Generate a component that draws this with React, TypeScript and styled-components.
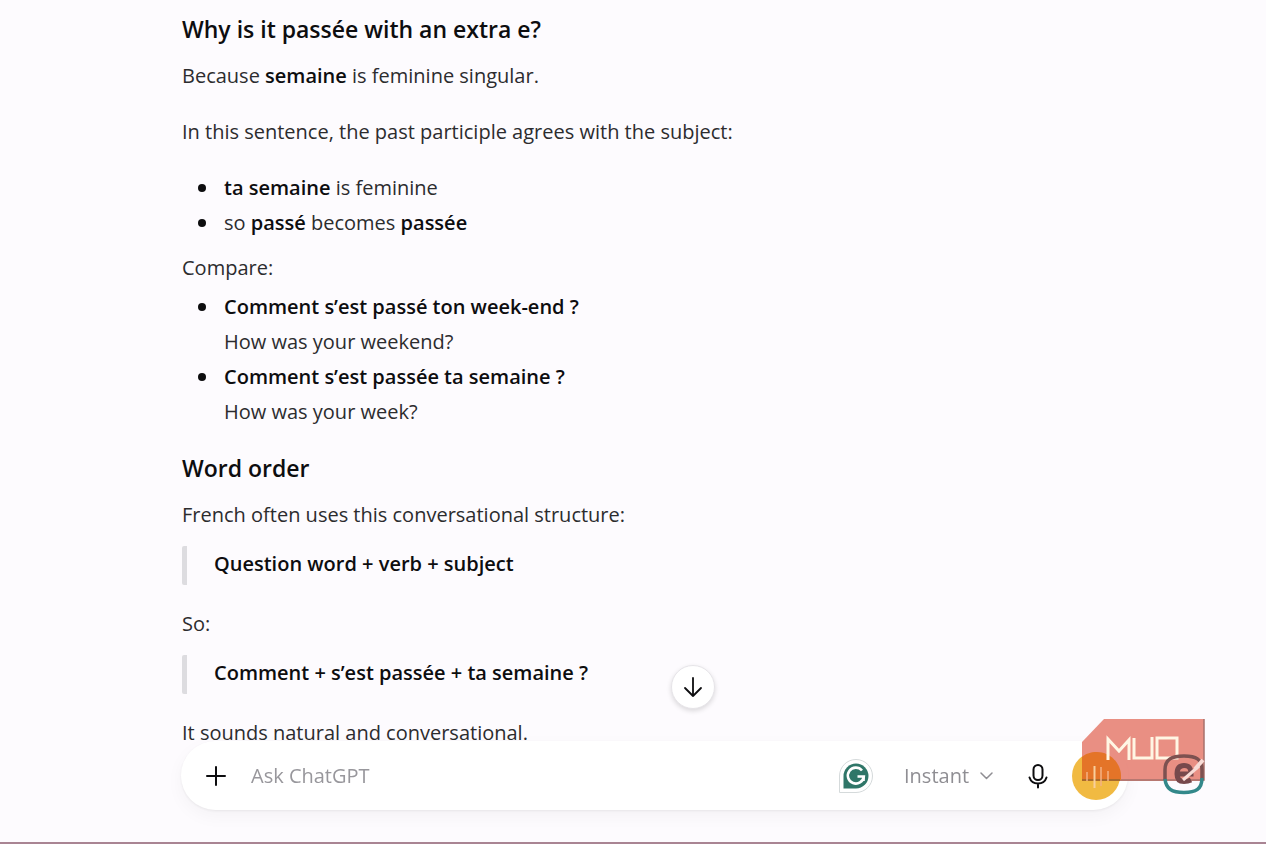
import React from "react";
import styled, { createGlobalStyle } from "styled-components";

const GlobalStyle = createGlobalStyle`
  *, *::before, *::after { box-sizing: border-box; }
  body {
    margin: 0;
    background: #fdfbfe;
    color: #2c2c2e;
    font-family: "Open Sans", "Noto Sans", sans-serif;
  }
  button, input, select { font: inherit; color: inherit; }
`;

const Page = styled.div`
  min-height: 100vh;
  border-bottom: 2px solid #a98493;
`;

const Article = styled.main`
  padding: 12px 140px 80px 182px;
  font-size: 20px;
  line-height: 35px;
`;

const Heading = styled.h2`
  margin: 0 0 11px;
  color: #0d0d0f;
  font-size: 23px;
  font-weight: 550;
`;

const Paragraph = styled.p<{ $gap?: number }>`
  margin: 0 0 ${({ $gap = 21 }) => $gap}px;
`;

const Strong = styled.strong`
  color: #0d0d0f;
  font-weight: 600;
`;

const List = styled.ul<{ $gap: number }>`
  margin: 0 0 ${({ $gap }) => $gap}px;
  padding: 0;
  list-style: none;
`;

const Item = styled.li`
  display: grid;
  grid-template-columns: 24px 1fr;
  padding-left: 18px;

  &::before {
    content: "";
    width: 8px;
    height: 8px;
    margin: 14px 0 0 -2px;
    border-radius: 50%;
    background: #0d0d0f;
  }
`;

const Quote = styled.blockquote`
  margin: 0 0 21px;
  padding: 0 0 4px 27px;
  border-left: 5px solid #dddce0;
  border-radius: 2px;
`;

const ScrollButton = styled.button`
  position: fixed;
  bottom: 135px;
  left: calc(50% + 38px);
  display: grid;
  place-items: center;
  width: 44px;
  height: 44px;
  padding: 0;
  border: 1px solid #e6e4e8;
  border-radius: 50%;
  background: #fff;
  color: #0d0d0f;
  box-shadow: 0 2px 5px rgba(0, 0, 0, 0.14);
`;

const Composer = styled.form`
  position: fixed;
  right: 138px;
  bottom: 34px;
  left: 181px;
  display: flex;
  align-items: center;
  height: 69px;
  padding: 0 8px 0 19px;
  border-radius: 35px;
  background: #fff;
  color: #8f8e93;
  font-size: 20px;
  box-shadow: 0 1px 3px rgba(0, 0, 0, 0.07), 0 6px 18px rgba(0, 0, 0, 0.04);
`;

const IconButton = styled.button`
  display: grid;
  place-items: center;
  flex: none;
  width: 32px;
  height: 36px;
  padding: 0;
  border: 0;
  background: none;
  color: #0d0d0f;
`;

const Prompt = styled.input`
  flex: 1;
  min-width: 0;
  margin: 0 16px 0 19px;
  padding: 0;
  border: 0;
  outline: 0;
  background: none;

  &::placeholder { color: #98979c; opacity: 1; }
`;

const ModelPicker = styled.label`
  display: flex;
  align-items: center;
  gap: 10px;
  margin: 0 29px 0 34px;
`;

const ModelSelect = styled.select`
  padding: 0;
  border: 0;
  outline: 0;
  appearance: none;
  background: none;
`;

const VoiceButton = styled(IconButton)`
  width: 48px;
  height: 48px;
  margin-left: 18px;
  border-radius: 50%;
  background: #f1ba42;
`;

const Watermark = styled.svg`
  position: fixed;
  right: 60px;
  bottom: 46px;
  pointer-events: none;
`;

export default function App() {
  return (
    <Page>
      <GlobalStyle />
      <Article>
        <Heading>Why is it passée with an extra e?</Heading>
        <Paragraph>
          Because <Strong>semaine</Strong> is feminine singular.
        </Paragraph>
        <Paragraph>In this sentence, the past participle agrees with the subject:</Paragraph>
        <List $gap={10}>
          <Item>
            <span><Strong>ta semaine</Strong> is feminine</span>
          </Item>
          <Item>
            <span>so <Strong>passé</Strong> becomes <Strong>passée</Strong></span>
          </Item>
        </List>
        <Paragraph $gap={4}>Compare:</Paragraph>
        <List $gap={22}>
          <Item>
            <span>
              <Strong>Comment s’est passé ton week-end ?</Strong>
              <br />
              How was your weekend?
            </span>
          </Item>
          <Item>
            <span>
              <Strong>Comment s’est passée ta semaine ?</Strong>
              <br />
              How was your week?
            </span>
          </Item>
        </List>
        <Heading>Word order</Heading>
        <Paragraph $gap={14}>French often uses this conversational structure:</Paragraph>
        <Quote><Strong>Question word + verb + subject</Strong></Quote>
        <Paragraph $gap={14}>So:</Paragraph>
        <Quote><Strong>Comment + s’est passée + ta semaine ?</Strong></Quote>
        <Paragraph $gap={0}>It sounds natural and conversational.</Paragraph>
      </Article>

      <ScrollButton type="button" aria-label="Scroll to bottom">
        <svg width="22" height="22" viewBox="0 0 22 22" fill="none" stroke="currentColor" strokeWidth="1.800" strokeLinecap="round" strokeLinejoin="round">
          <path d="M11 2v18M3 12l8 8 8-8" />
        </svg>
      </ScrollButton>

      <Composer onSubmit={(event) => event.preventDefault()}>
        <IconButton type="button" aria-label="Add files">
          <svg width="20" height="20" viewBox="0 0 20 20" stroke="currentColor" strokeWidth="2" strokeLinecap="round">
            <path d="M10 1v18M1 10h18" />
          </svg>
        </IconButton>
        <Prompt aria-label="Message" placeholder="Ask ChatGPT" />
        <IconButton type="button" aria-label="Grammarly">
          <svg width="36" height="36" viewBox="0 0 36 36" fill="none">
            <path d="M1.5 34.5V18A16.5 16.5 0 1 1 18 34.5Z" fill="#fff" stroke="#d5dadb" />
            <path d="M5.500 30.500V18A12.500 12.500 0 1 1 18 30.500Z" fill="#2f7668" />
            <path d="M24 12.500A8 8 0 1 0 25.800 18.500H19.500" stroke="#fff" strokeWidth="2.600" />
            <path d="M25.800 18.500V23" stroke="#fff" strokeWidth="2" />
          </svg>
        </IconButton>
        <ModelPicker>
          <ModelSelect aria-label="Model">
            <option>Instant</option>
          </ModelSelect>
          <svg width="13" height="8" viewBox="0 0 13 8" fill="none" stroke="currentColor" strokeWidth="1.500" strokeLinecap="round" strokeLinejoin="round">
            <path d="M1 1l5.500 5.500L12 1" />
          </svg>
        </ModelPicker>
        <IconButton type="button" aria-label="Dictate">
          <svg width="20" height="26" viewBox="0 0 20 26" fill="none" stroke="currentColor" strokeWidth="2" strokeLinecap="round">
            <rect x="5.500" y="2" width="9" height="15" rx="4.500" />
            <path d="M1.500 14.500c1.200 3.700 4.500 6 8.500 6s7.300-2.300 8.500-6M10 20.500V24.500" />
          </svg>
        </IconButton>
        <VoiceButton type="button" aria-label="Use voice" />
      </Composer>

      <Watermark width="125" height="80" viewBox="0 0 125 80" fill="none" aria-hidden="true">
        <path d="M23 1H123V63H1V24Z" fill="#e68072" fillOpacity=".88" />
        <path d="M1 62H123V1" stroke="#a8716c" strokeWidth="1.500" />
        <path d="M1 39C4 36 10 34 16 34C29 34 40 45 40 58V62H1Z" fill="#e47428" />
        <path d="M1 62H39" stroke="#a86a2c" strokeWidth="2" />
        <path d="M6 54v9M20 49v19M27 53v10" stroke="#f3b183" strokeWidth="1.500" />
        <path d="M13.500 48v22" stroke="#f8cf9c" strokeWidth="2" />
        <path d="M27 42V21L38 33L48 22V42M53 20V40H71V19M76 40V20H96V40Z" stroke="#fff6e4" strokeWidth="3" />
        <path d="M84 62V52C84 41 91 38 103 38C115 38 121 41 121 52V62" stroke="#7d5150" strokeWidth="3.500" />
        <path d="M84 61C85 71 91 74.500 103 74.500C115 74.500 121 71 121 60" stroke="#33888a" strokeWidth="3.500" />
        <path d="M97 56H110C110 50 108 47.500 103 47.500C98 47.500 96 51 96 56C96 61 98 63.500 103 63.500C106 63.500 108 63 110 62" stroke="#77494c" strokeWidth="5" />
        <path d="M102 62L118 48" stroke="#f8dcd6" strokeWidth="3" />
        <path d="M114 51L122 42" stroke="#f8dcd6" strokeWidth="4" />
      </Watermark>
    </Page>
  );
}
